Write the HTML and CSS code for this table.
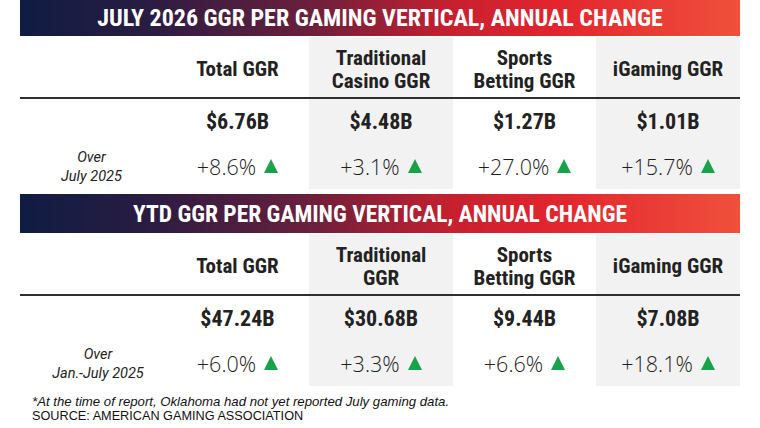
FILE: index.html
```html
<!DOCTYPE html>
<html>
<head>
<meta charset="utf-8">
<link rel="stylesheet" href="styles.css">
</head>
<body>
<div class="page">
  <section class="block">
    <div class="banner">JULY 2026 GGR PER GAMING VERTICAL, ANNUAL CHANGE</div>
    <div class="grid">
      <div class="hd"></div>
      <div class="hd">Total GGR</div>
      <div class="hd gray">Traditional<br>Casino GGR</div>
      <div class="hd">Sports<br>Betting GGR</div>
      <div class="hd gray">iGaming GGR</div>

      <div class="val"></div>
      <div class="val">$6.76B</div>
      <div class="val gray">$4.48B</div>
      <div class="val">$1.27B</div>
      <div class="val gray">$1.01B</div>

      <div class="lbl">Over<br>July 2025</div>
      <div class="pct">+8.6% <span class="up"></span></div>
      <div class="pct gray">+3.1% <span class="up"></span></div>
      <div class="pct">+27.0% <span class="up"></span></div>
      <div class="pct gray">+15.7% <span class="up"></span></div>
    </div>
  </section>
  <section class="block">
    <div class="banner b2">YTD GGR PER GAMING VERTICAL, ANNUAL CHANGE</div>
    <div class="grid">
      <div class="hd"></div>
      <div class="hd">Total GGR</div>
      <div class="hd gray">Traditional<br>GGR</div>
      <div class="hd">Sports<br>Betting GGR</div>
      <div class="hd gray">iGaming GGR</div>

      <div class="val"></div>
      <div class="val">$47.24B</div>
      <div class="val gray">$30.68B</div>
      <div class="val">$9.44B</div>
      <div class="val gray">$7.08B</div>

      <div class="lbl lbl2">Over<br>Jan.-July 2025</div>
      <div class="pct">+6.0% <span class="up"></span></div>
      <div class="pct gray">+3.3% <span class="up"></span></div>
      <div class="pct">+6.6% <span class="up"></span></div>
      <div class="pct gray">+18.1% <span class="up"></span></div>
    </div>
  </section>
  <div class="notes">
    <p class="note">*At the time of report, Oklahoma had not yet reported July gaming data.</p>
    <p class="src">SOURCE: AMERICAN GAMING ASSOCIATION</p>
  </div>
</div>
</body>
</html>
```
FILE: styles.css
```css
* { box-sizing: border-box; }
html, body { margin: 0; padding: 0; background: #fff; }
body { width: 760px; height: 428px; overflow: hidden; }
.page { padding: 0 20px; display: flex; flex-direction: column; }
.block { display: flex; flex-direction: column; }
.block + .block { margin-top: 5px; }
.banner, .hd, .val {
  font-family: "Roboto Condensed", "Roboto", sans-serif;
  font-stretch: 75%;
}
.banner {
  height: 36px;
  background: linear-gradient(90deg, #0f1c43 0%, #2a1c42 18%, #6a1f3c 40%, #c7202f 60%, #e3252e 75%, #f0503c 100%);
  color: #fff;
  font-weight: bold;
  font-size: 24px;
  display: flex; align-items: center; justify-content: center;
}
.banner.b2 { height: 39px; font-size: 23.5px; }
.grid {
  display: grid;
  grid-template-columns: 146px 143px 144px 143px 144px;
  grid-template-rows: 62px 44px 46px;
  margin-top: 1px;
}
.gray { background: #f2f2f2; }
.hd {
  font-weight: bold;
  font-size: 21px;
  line-height: 23px;
  color: #222;
  display: flex; align-items: center; justify-content: center;
  text-align: center;
  padding-top: 5px;
  border-bottom: 2px solid #2f2f2f;
}
.val {
  font-weight: bold;
  font-size: 22px;
  color: #222;
  display: flex; align-items: center; justify-content: center;
}
.pct {
  font-family: "Open Sans", sans-serif;
  font-weight: 300;
  font-size: 21.5px;
  color: #1e1e1e;
  display: flex; align-items: center; justify-content: center;
  gap: 8px;
}
.lbl {
  font-family: "Roboto", sans-serif;
  font-style: italic;
  font-size: 14.5px;
  line-height: 19px;
  color: #222;
  display: flex; align-items: center; justify-content: center;
  text-align: center;
  padding-top: 2px;
  padding-right: 3px;
}
.lbl2 { padding-right: 0; padding-left: 10px; }
.up {
  width: 0; height: 0;
  border-left: 7px solid transparent;
  border-right: 7px solid transparent;
  border-bottom: 14px solid #16a34a;
}
.notes { padding: 8px 0 0 12px; }
.note, .src {
  margin: 0;
  font-family: "Liberation Sans", sans-serif;
  font-size: 13.2px;
  line-height: 15px;
  color: #111;
}
.note { font-style: italic; }
.src { font-size: 12.7px; }
```
